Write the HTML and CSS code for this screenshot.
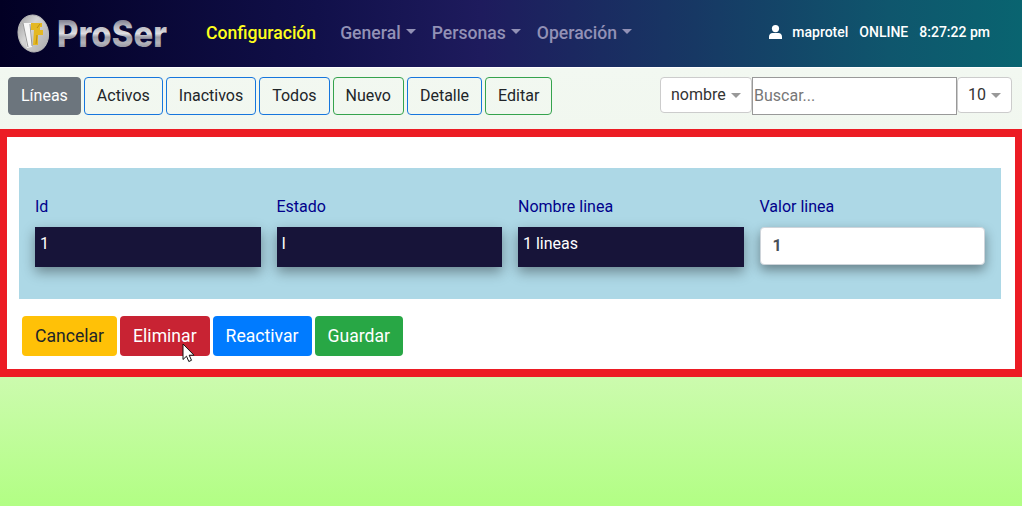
FILE: index.html
```html
<!DOCTYPE html>
<html lang="es">
<head>
<meta charset="utf-8">
<title>ProSer</title>
<link rel="stylesheet" href="styles.css">
</head>
<body>
<header class="navbar">
  <svg class="logo" width="156" height="50" viewBox="0 -4 156 50" role="img" aria-label="ProSer">
    <defs>
      <linearGradient id="metal" x1="0" y1="6" x2="0" y2="34" gradientUnits="userSpaceOnUse">
        <stop offset="0" stop-color="#77778a"/><stop offset=".25" stop-color="#b5b5bd"/>
        <stop offset=".52" stop-color="#dedee2"/><stop offset=".65" stop-color="#9c9ca6"/>
        <stop offset=".85" stop-color="#b4b4bb"/><stop offset="1" stop-color="#9898a4"/>
      </linearGradient>
      <linearGradient id="disc" x1="0" y1="0" x2="1" y2="1">
        <stop offset="0" stop-color="#999"/><stop offset=".4" stop-color="#d4d4d4"/><stop offset="1" stop-color="#aaa"/>
      </linearGradient>
    </defs>
    <ellipse cx="17.300" cy="20.500" rx="15.200" ry="18.500" transform="rotate(-8 17.3 20.5)" fill="url(#disc)" stroke="#b8b8b8"/>
    <path d="M7 10h8l1 24-5 1-2-14z" fill="#f7f7f7"/>
    <path d="M7 10l5 24M14 11l2 22" stroke="#999" stroke-width="1" fill="none"/>
    <path d="M15 10h11v4h-2v3h3v5h-5v10h-5l1-15h-3z" fill="#e4b823"/>
    <path d="M21 15l3-4M20 31l1-9" stroke="#bd8e10" stroke-width="1" fill="none"/>
    <text class="logo-text" x="41" y="33.500" textLength="110" lengthAdjust="spacingAndGlyphs" fill="url(#metal)">ProSer</text>
  </svg>
  <nav class="menu">
    <a class="menu-item active">Configuración</a>
    <a class="menu-item caret">General</a>
    <a class="menu-item caret">Personas</a>
    <a class="menu-item caret">Operación</a>
  </nav>
  <div class="session">
    <svg width="13" height="14" viewBox="0 0 13 14"><circle cx="6.5" cy="3.6" r="3.6" fill="#fff"/><path d="M0 14v-2.3C0 9.5 1.5 8 3.6 8h5.8C11.500 8 13 9.500 13 11.700V14z" fill="#fff"/></svg>
    <span class="user">maprotel</span><span class="status">ONLINE</span><span>8:27:22 pm</span>
  </div>
</header>
<section class="toolbar">
  <div class="filters">
    <button class="btn current">Líneas</button>
    <button class="btn blue">Activos</button>
    <button class="btn blue">Inactivos</button>
    <button class="btn blue">Todos</button>
    <button class="btn green">Nuevo</button>
    <button class="btn blue">Detalle</button>
    <button class="btn green">Editar</button>
  </div>
  <div class="search">
    <div class="select field-select">nombre</div>
    <input class="search-input" placeholder="Buscar...">
    <div class="select count-select">10</div>
  </div>
</section>
<main class="panel">
  <div class="form">
    <div class="field"><label>Id</label><div class="readonly">1</div></div>
    <div class="field"><label>Estado</label><div class="readonly">I</div></div>
    <div class="field"><label>Nombre linea</label><div class="readonly">1 lineas</div></div>
    <div class="field"><label>Valor linea</label><input class="value" value="1"></div>
  </div>
  <div class="actions">
    <button class="action cancel">Cancelar</button>
    <button class="action delete">Eliminar<svg class="pointer" width="13" height="20" viewBox="0 0 13 20"><path d="M1 1v15.500l3.500-3.300 2.300 5.300 2.700-1.200-2.300-5.100H12z" fill="#fff" stroke="#111" stroke-width="1"/></svg></button>
    <button class="action reactivate">Reactivar</button>
    <button class="action save">Guardar</button>
  </div>
</main>
</body>
</html>
```

FILE: styles.css
```css
* { box-sizing: border-box; }
html { height: 100%; }
body {
  margin: 0;
  height: 506px;
  overflow: hidden;
  font: 16px/24px Roboto, sans-serif;
  color: #212529;
  background: linear-gradient(#f2f8f1 68px, #f1f7ef 129px, #ccfbae 377px, #b2fe84 506px);
}
button, input { font: inherit; margin: 0; }
.navbar {
  height: 67px;
  display: flex;
  align-items: center;
  padding: 0 32px 0 16px;
  background: linear-gradient(90deg, #020024 0%, #11104a 31%, #1e1b5d 47%, #173864 68%, #0f566d 87%, #096470 100%);
}
.logo { flex: none; }
.logo-text { font: 800 37px Inter, sans-serif; }
.menu { display: flex; margin: -2px 0 0 34px; font-size: 17.6px; font-weight: 500; white-space: nowrap; }
.menu-item { color: #9291b6; margin-right: 16px; }
.active { color: #ffff1c; margin-right: 24px; }
.caret::after {
  content: "";
  display: inline-block;
  margin-left: 5px;
  vertical-align: 5px;
  border: 5px solid transparent;
  border-top-color: currentColor;
  border-bottom: 0;
}
.session { margin: -3px 0 0 auto; display: flex; align-items: center; font-size: 14px; font-weight: 500; color: #fff; white-space: nowrap; }
.user { margin: 0 11px 0 10px; }
.status { margin-right: 11px; }
.toolbar { height: 62px; display: flex; justify-content: space-between; padding: 9px 10px 0 8px; border-top: 1px solid #fff; }
.filters { display: flex; gap: 3px; }
.btn { height: 38px; padding: 0 12px; border: 1px solid; border-radius: 4px; background: transparent; color: #212529; }
.current { background: #6c757d; border-color: #6c757d; color: #fff; }
.blue { border-color: #1676dd; }
.green { border-color: #35a34d; }
.search { display: flex; }
.select { height: 36px; padding: 0 10px; line-height: 34px; border: 1px solid #ccc; border-radius: 4px; background: #fff; color: #333; white-space: nowrap; }
.select::after { content: ""; display: inline-block; margin-left: 5px; vertical-align: 2px; border: 5px solid transparent; border-top-color: #999; border-bottom: 0; }
.field-select { width: 92px; }
.count-select { width: 55px; }
.search-input { width: 205px; height: 38px; padding: 0 1px 2px; border: 1px solid #999; background: #fff; }
.search-input::placeholder { color: #777; }
.panel { height: 248px; border: 8px solid #ec1c24; border-width: 8px 7px; background: #fff; padding: 31px 14px 0 12px; }
.form { height: 131px; display: grid; grid-template-columns: repeat(4, 1fr); gap: 16px; padding: 27px 16px 0; background: #add8e6; }
.field label { display: block; color: #00008b; margin-bottom: 8px; }
.readonly { height: 40px; padding: 5px; background: #171439; color: #fff; box-shadow: 0 5px 12px rgba(0, 0, 0, .38); }
.value { width: 100%; height: 38px; padding: 0 12px 2px; border: 1px solid #ced4da; border-radius: 4px; background: #fff; color: #495057; font-weight: 700; box-shadow: 0 5px 12px rgba(0, 0, 0, .4); }
.actions { display: flex; gap: 3px; padding: 17px 0 0 3px; }
.action { position: relative; height: 40px; padding: 0 13px; border: 0; border-radius: 4px; font-size: 17.6px; color: #fff; }
.cancel { background: #ffc107; color: #212529; }
.delete { background: #c82333; }
.reactivate { background: #007bff; }
.save { background: #28a745; }
.pointer { position: absolute; left: 62px; top: 27px; }
```
